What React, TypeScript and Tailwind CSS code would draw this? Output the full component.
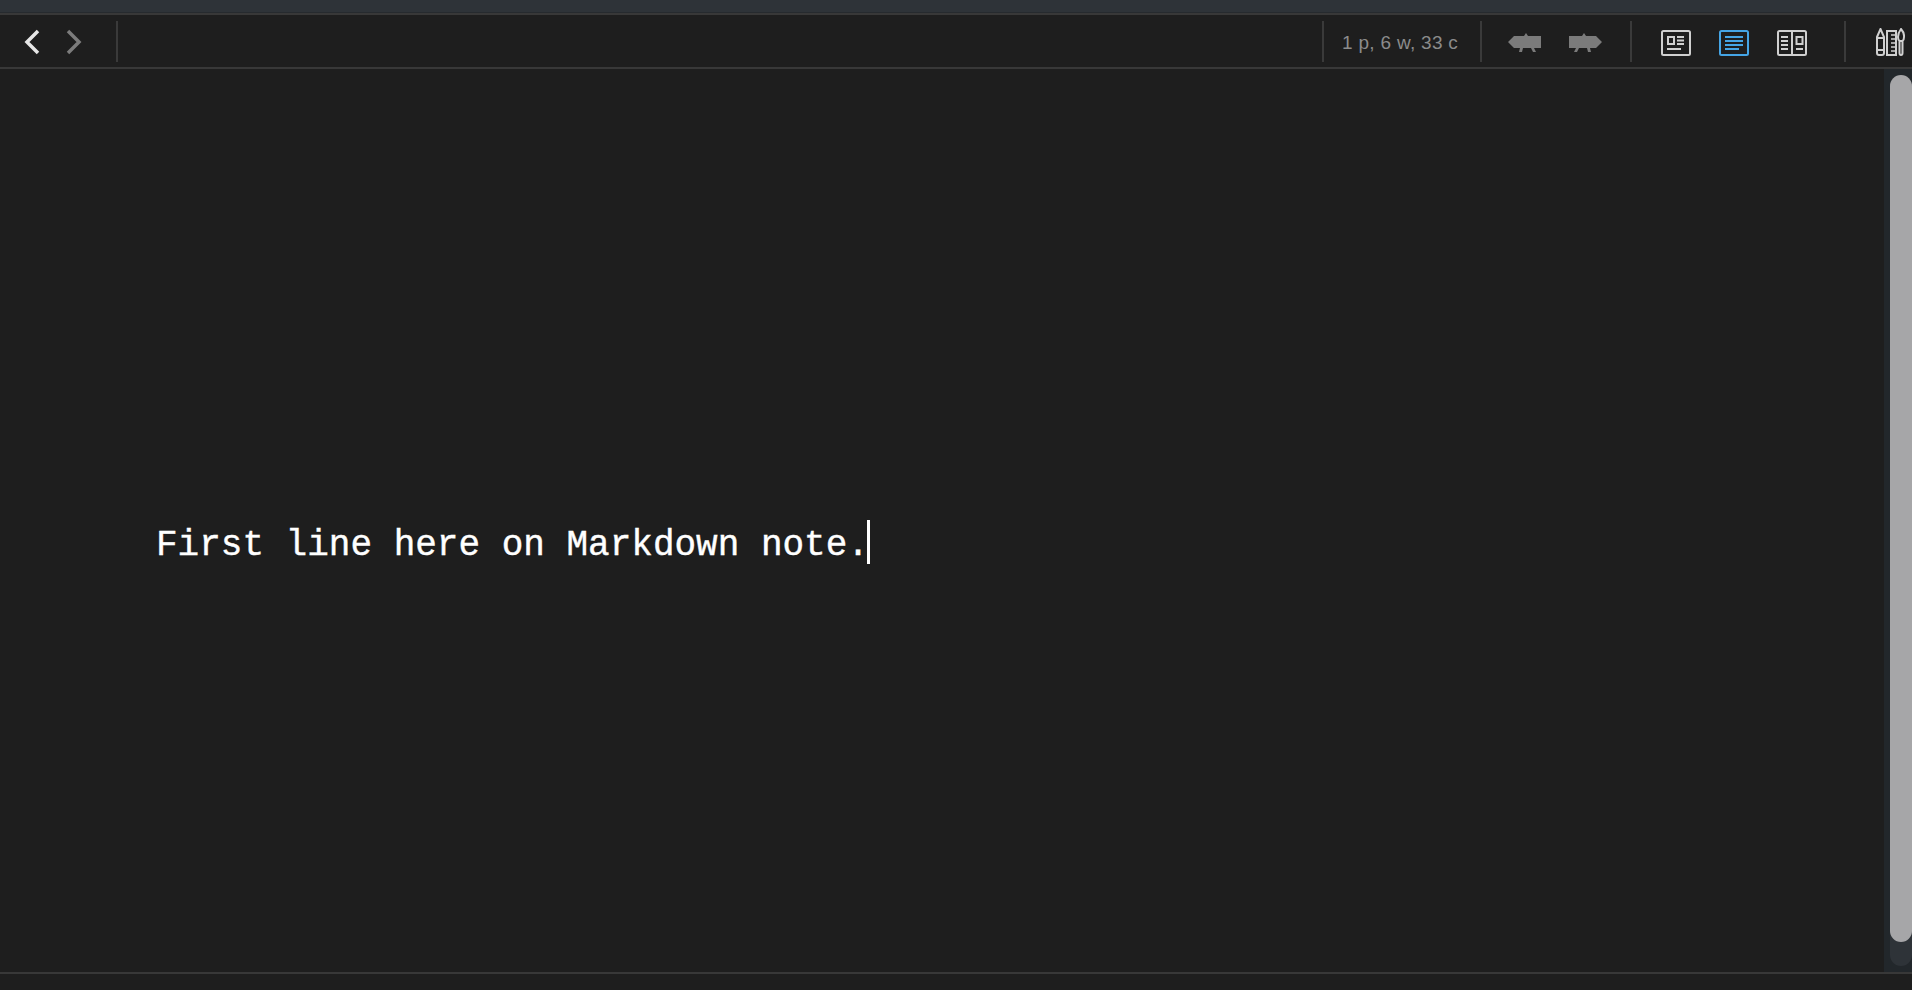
const Sep = () => <div className="w-[2px] h-[41px] bg-[#3a3a3a] shrink-0" />;

function Chevron({ dir, color }: { dir: "left" | "right"; color: string }) {
  return (
    <svg width="16" height="26" viewBox="0 0 16 26" fill="none" className="shrink-0 mt-[2px]">
      <path
        d={dir === "left" ? "M14 2 L3 13 L14 24" : "M2 2 L13 13 L2 24"}
        stroke={color}
        strokeWidth="3.5"
      />
    </svg>
  );
}

function ShiftArrow({ dir }: { dir: "left" | "right" }) {
  return (
    <svg width="34" height="20" viewBox="0 0 34 20" fill="#7b7b7b" className="shrink-0 mt-[3px]">
      <g transform={dir === "right" ? "translate(33 0) scale(-1 1)" : undefined}>
        <path d="M0 9 L6 3 H16 L18 0 L20 3 H33 V15 H6 Z" />
        <path d="M12 15 H15 L14 19 H11 Z M23 15 H26 L28 19 H25 Z" />
      </g>
    </svg>
  );
}

function LayoutIcon({ kind }: { kind: "preview" | "editor" | "split" }) {
  const color = kind === "editor" ? "#45a5e6" : "#d0d0d0";
  return (
    <svg width="30" height="26" viewBox="0 0 30 26" fill="none" stroke={color} strokeWidth="2" className="shrink-0 mt-[4px]">
      <rect x="1" y="1" width="28" height="24" rx="1.5" />
      {kind === "preview" && (
        <>
          <rect x="7" y="7" width="6" height="7" />
          <path d="M16 7h7M16 10.5h7M16 14h7M6 19h14" />
        </>
      )}
      {kind === "editor" && <path d="M6 7h18M6 11h18M6 15h18M6 19h14" strokeWidth="2" />}
      {kind === "split" && (
        <>
          <path d="M15 1v24M4 7h7M4 11h7M4 15h7M4 19h7M19 19h7" />
          <rect x="19.5" y="7" width="6" height="7" />
        </>
      )}
    </svg>
  );
}

function ToolsIcon() {
  return (
    <svg width="29" height="28" viewBox="0 0 29 28" fill="none" stroke="#d0d0d0" strokeWidth="2" className="shrink-0 mt-[1px]">
      <path d="M1 9 L4.5 1 L8 9 V25 Q8 27 6 27 H3 Q1 27 1 25 Z M1 10h7M1 22h7" />
      <rect x="11" y="3" width="9" height="24" />
      <path d="M15 7h4M15 11h4M15 15h4M15 19h4M15 23h4" strokeWidth="1.4" />
      <path d="M25 1 Q28.5 5 28 9 Q28 12 26.5 13 H23.5 Q22 12 22 9 Q22 5 25 1 Z M23.5 13 V25 Q23.5 27 25 27 Q26.5 27 26.5 25 V13" />
    </svg>
  );
}

export default function App() {
  return (
    <div className="w-[1912px] h-[990px] flex flex-col overflow-hidden bg-[#1e1e1e] font-['Liberation_Sans',sans-serif]">
      {/* Window top edge */}
      <div className="h-[13px] shrink-0 bg-[#2e3338] border-b border-[#262a2e]" />
      <div className="h-[2px] shrink-0 bg-[#383838]" />

      {/* Toolbar */}
      <div className="h-[52px] shrink-0 flex items-center bg-[#1e1e1e]">
        <div className="w-[24px] shrink-0" />
        <Chevron dir="left" color="#e6e6e6" />
        <div className="w-[26px] shrink-0" />
        <Chevron dir="right" color="#7c7c7c" />
        <div className="w-[34px] shrink-0" />
        <Sep />
        <div className="flex-1" />
        <Sep />
        <div className="w-[119px] ml-[18px] mr-[19px] mt-[2px] shrink-0 text-[19px] leading-none tracking-[0.3px] text-[#8b8b8b] whitespace-nowrap">1 p, 6 w, 33 c</div>
        <Sep />
        <div className="w-[26px] shrink-0" />
        <ShiftArrow dir="left" />
        <div className="w-[27px] shrink-0" />
        <ShiftArrow dir="right" />
        <div className="w-[27px] shrink-0" />
        <Sep />
        <div className="w-[29px] shrink-0" />
        <LayoutIcon kind="preview" />
        <div className="w-[28px] shrink-0" />
        <LayoutIcon kind="editor" />
        <div className="w-[28px] shrink-0" />
        <LayoutIcon kind="split" />
        <div className="w-[37px] shrink-0" />
        <Sep />
        <div className="w-[30px] shrink-0" />
        <ToolsIcon />
        <div className="w-[7px] shrink-0" />
      </div>
      <div className="h-[2px] shrink-0 bg-[#383838]" />

      {/* Editor and scrollbar */}
      <div className="flex-1 flex min-h-0">
        <div className="flex-1 pl-[156px] pt-[450px]">
          <div className="flex items-start h-[54px]">
            <span className="font-['Liberation_Mono',monospace] text-[36px] leading-[54px] text-white whitespace-pre [-webkit-text-stroke:0.4px_white]">First line here on Markdown note.</span>
            <span className="w-[3px] h-[44px] mt-[1px] -ml-[2px] bg-white shrink-0" />
          </div>
        </div>
        <div className="w-[28px] shrink-0 bg-[#22272b] pl-[6px] pt-[6px] pb-[6px]">
          <div className="h-full rounded-full bg-[#2e3338]">
            <div className="h-[867px] rounded-full bg-[#a6a6a8]" />
          </div>
        </div>
      </div>

      {/* Status bar */}
      <div className="h-[2px] shrink-0 bg-[#383838]" />
      <div className="h-[16px] shrink-0 bg-[#1e1e1e]" />
    </div>
  );
}
